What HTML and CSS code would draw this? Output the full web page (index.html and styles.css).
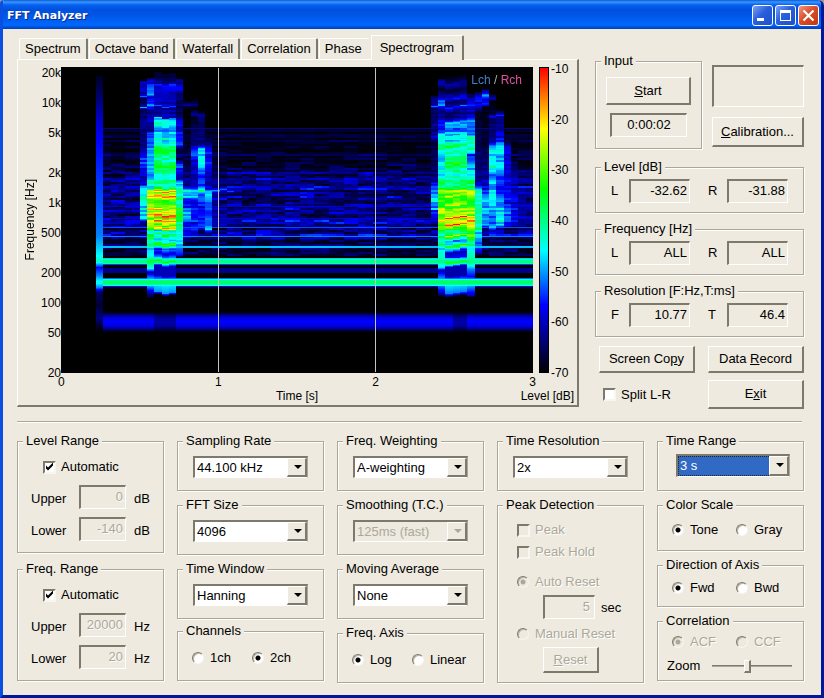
FILE: index.html
```html
<!DOCTYPE html>
<html lang="en">
<head>
<meta charset="utf-8">
<title>FFT Analyzer</title>
<link rel="stylesheet" href="styles.css">
</head>
<body>
<div class="window">
  <header class="titlebar">
    <h1>FFT Analyzer</h1>
    <button class="caption" aria-label="Minimize"><svg viewBox="0 0 21 21"><path d="M5 13h7v3H5z" fill="#fff"/></svg></button>
    <button class="caption" aria-label="Maximize"><svg viewBox="0 0 21 21"><path d="M5 5h11v11H5zM6 8v7h9V8z" fill="#fff" fill-rule="evenodd"/></svg></button>
    <button class="caption caption-close" aria-label="Close"><svg viewBox="0 0 21 21"><path d="M5.5 5.5l10 10M15.500 5.500l-10 10" stroke="#fff" stroke-width="2.200"/></svg></button>
  </header>

  <main class="content">
    <div class="top">
      <section class="tabbed">
        <div class="tabs" role="tablist">
          <button class="tab" role="tab">Spectrum</button>
          <button class="tab" role="tab">Octave band</button>
          <button class="tab" role="tab">Waterfall</button>
          <button class="tab" role="tab">Correlation</button>
          <button class="tab" role="tab">Phase</button>
          <button class="tab tab-active" role="tab" aria-selected="true">Spectrogram</button>
        </div>
        <div class="panel">
          <div class="chart">
            <div class="axis-title"><span>Frequency [Hz]</span></div>
            <div class="freq-ticks"><span>20k</span><span>10k</span><span>5k</span><span>2k</span><span>1k</span><span>500</span><span>200</span><span>100</span><span>50</span><span>20</span></div>
            <div class="plot">
              <canvas id="spectrogram" width="472" height="306"></canvas>
              <div class="legend"><span class="lch">Lch</span> / <span class="rch">Rch</span></div>
            </div>
            <div class="scale"></div>
            <div class="level-ticks"><span>-10</span><span>-20</span><span>-30</span><span>-40</span><span>-50</span><span>-60</span><span>-70</span></div>
            <div class="time-ticks"><span>0</span><span>1</span><span>2</span><span>3</span></div>
            <div class="time-title">Time [s]</div>
            <div class="level-title">Level [dB]</div>
          </div>
        </div>
      </section>

      <section class="side">
        <div class="side-top">
          <fieldset class="input-group">
            <legend>Input</legend>
            <button class="btn btn-start"><u>S</u>tart</button>
            <output class="sunken clock">0:00:02</output>
          </fieldset>
          <div class="calibration">
            <div class="sunken lamp"></div>
            <button class="btn btn-calibration"><u>C</u>alibration...</button>
          </div>
        </div>
        <fieldset class="readout">
          <legend>Level [dB]</legend>
          <label for="level-l">L</label><output class="sunken" id="level-l">-32.62</output>
          <label class="second" for="level-r">R</label><output class="sunken" id="level-r">-31.88</output>
        </fieldset>
        <fieldset class="readout">
          <legend>Frequency [Hz]</legend>
          <label for="freq-l">L</label><output class="sunken" id="freq-l">ALL</output>
          <label class="second" for="freq-r">R</label><output class="sunken" id="freq-r">ALL</output>
        </fieldset>
        <fieldset class="readout">
          <legend>Resolution [F:Hz,T:ms]</legend>
          <label for="res-f">F</label><output class="sunken" id="res-f">10.77</output>
          <label class="second" for="res-t">T</label><output class="sunken" id="res-t">46.4</output>
        </fieldset>
        <div class="actions">
          <button class="btn">Screen Co<u>p</u>y</button>
          <button class="btn">Data <u>R</u>ecord</button>
          <label class="option"><input type="checkbox">Split L-R</label>
          <button class="btn btn-exit">E<u>x</u>it</button>
        </div>
      </section>
    </div>

    <hr class="divider">

    <div class="settings">
      <div class="column column-ranges">
        <fieldset class="range">
          <legend>Level Range</legend>
          <label class="option auto"><input type="checkbox" checked>Automatic</label>
          <div class="bound"><label for="lv-up">Upper</label><input class="sunken" id="lv-up" value="0" disabled><span>dB</span></div>
          <div class="bound"><label for="lv-lo">Lower</label><input class="sunken" id="lv-lo" value="-140" disabled><span>dB</span></div>
        </fieldset>
        <fieldset class="range">
          <legend>Freq. Range</legend>
          <label class="option auto"><input type="checkbox" checked>Automatic</label>
          <div class="bound"><label for="fr-up">Upper</label><input class="sunken" id="fr-up" value="20000" disabled><span>Hz</span></div>
          <div class="bound"><label for="fr-lo">Lower</label><input class="sunken" id="fr-lo" value="20" disabled><span>Hz</span></div>
        </fieldset>
      </div>

      <div class="column">
        <fieldset class="choice"><legend>Sampling Rate</legend>
          <div class="combo"><select aria-label="Sampling Rate"><option>44.100 kHz</option></select></div></fieldset>
        <fieldset class="choice"><legend>FFT Size</legend>
          <div class="combo"><select aria-label="FFT Size"><option>4096</option></select></div></fieldset>
        <fieldset class="choice"><legend>Time Window</legend>
          <div class="combo"><select aria-label="Time Window"><option>Hanning</option></select></div></fieldset>
        <fieldset class="radios radios-tall radios-raised"><legend>Channels</legend>
          <label class="option"><input type="radio" name="channels">1ch</label>
          <label class="option"><input type="radio" name="channels" checked>2ch</label></fieldset>
      </div>

      <div class="column">
        <fieldset class="choice"><legend>Freq. Weighting</legend>
          <div class="combo"><select aria-label="Freq. Weighting"><option>A-weighting</option></select></div></fieldset>
        <fieldset class="choice"><legend>Smoothing (T.C.)</legend>
          <div class="combo combo-disabled"><select aria-label="Smoothing" disabled><option>125ms (fast)</option></select></div></fieldset>
        <fieldset class="choice"><legend>Moving Average</legend>
          <div class="combo"><select aria-label="Moving Average"><option>None</option></select></div></fieldset>
        <fieldset class="radios radios-tall"><legend>Freq. Axis</legend>
          <label class="option"><input type="radio" name="axis" checked>Log</label>
          <label class="option"><input type="radio" name="axis">Linear</label></fieldset>
      </div>

      <div class="column">
        <fieldset class="choice"><legend>Time Resolution</legend>
          <div class="combo"><select aria-label="Time Resolution"><option>2x</option></select></div></fieldset>
        <fieldset class="peak"><legend>Peak Detection</legend>
          <label class="option disabled"><input type="checkbox" disabled>Peak</label>
          <label class="option disabled"><input type="checkbox" disabled>Peak Hold</label>
          <label class="option disabled auto-reset"><input type="radio" name="reset" checked disabled>Auto Reset</label>
          <div class="delay"><input class="sunken" id="delay" value="5" disabled><label for="delay">sec</label></div>
          <label class="option disabled manual-reset"><input type="radio" name="reset" disabled>Manual Reset</label>
          <button class="btn btn-reset" disabled><u>R</u>eset</button></fieldset>
      </div>

      <div class="column">
        <fieldset class="choice choice-focus"><legend>Time Range</legend>
          <div class="combo combo-focus"><select aria-label="Time Range"><option>3 s</option></select></div></fieldset>
        <fieldset class="radios radios-wide"><legend>Color Scale</legend>
          <label class="option"><input type="radio" name="color" checked>Tone</label>
          <label class="option"><input type="radio" name="color">Gray</label></fieldset>
        <fieldset class="radios radios-wide radios-short"><legend>Direction of Axis</legend>
          <label class="option"><input type="radio" name="direction" checked>Fwd</label>
          <label class="option"><input type="radio" name="direction">Bwd</label></fieldset>
        <fieldset class="radios radios-wide correlation"><legend>Correlation</legend>
          <label class="option disabled"><input type="radio" name="corr" checked disabled>ACF</label>
          <label class="option disabled"><input type="radio" name="corr" disabled>CCF</label>
          <div class="zoom"><label for="zoom">Zoom</label><input type="range" id="zoom" min="0" max="100" value="43"></div></fieldset>
      </div>
    </div>
  </main>
</div>
<script src="spectrogram.js"></script>
</body>
</html>
```
FILE: styles.css
```css
:root {
  --face: #eeeadf;
  --dark: #7d796b;
  --line: #aca899;
  --light: #fff;
}

* { box-sizing: border-box; }

body {
  margin: 0;
  background: #9a9a9a;
  color: #000;
  font: 13px/16px "Liberation Sans", Arial, sans-serif;
}

button, input, select { font: inherit; color: inherit; margin: 0; }

.window {
  min-height: 100vh;
  display: flex;
  flex-direction: column;
  background: var(--face);
  border: solid;
  border-width: 0 3px 3px;
  border-color: #0a4fe0 #00189c #00189c #0a4fe0;
  border-radius: 4px 6px 0 0;
  overflow: hidden;
}

.titlebar {
  display: flex;
  align-items: center;
  gap: 2px;
  height: 29px;
  margin: 0 -3px;
  padding: 2px 5px 0 7px;
  background: linear-gradient(#0a5ad8 0, #3a95ff 2px, #0560f0 5px, #0050dd 10px, #0058ea 17px, #0068ff 25px, #0048c8 28px, #0040b8 29px);
}

.titlebar h1 {
  flex: 1;
  margin: 0;
  color: #fff;
  font: bold 11px/16px "DejaVu Sans", Verdana, sans-serif;
  text-shadow: 1px 1px 0 #0a2a80;
}

.caption {
  width: 21px;
  height: 21px;
  padding: 0;
  border: 1px solid #fff;
  border-radius: 3px;
  background: linear-gradient(135deg, #7ba2f2, #2a5fdc 45%, #1c50cc);
}

.caption svg { display: block; width: 21px; height: 21px; margin: -1px; }
.caption-close { background: linear-gradient(135deg, #f09a80, #dc4c28 45%, #c03810); }

.content { padding: 6px 17px 12px 14px; }

.top { display: flex; gap: 16px; }

/* Tabs and chart panel */
.tabbed { flex: 1; min-width: 0; }

.tabs {
  display: flex;
  align-items: flex-end;
  gap: 1px;
  height: 24px;
  padding-left: 2px;
}

.tab {
  height: 21px;
  padding: 0 5px;
  border: solid;
  border-width: 1px 2px 0 1px;
  border-color: var(--light) var(--dark) var(--light) var(--light);
  border-radius: 2px 2px 0 0;
  background: var(--face);
  white-space: nowrap;
}

.tab:nth-last-child(2) { border-right-color: var(--face); padding-right: 6px; }

.tab-active {
  position: relative;
  height: 25px;
  margin-bottom: -1px;
  padding: 0 8px 1px;
}

.panel {
  border: solid;
  border-width: 1px 2px 2px 1px;
  border-color: var(--light) var(--dark) var(--dark) var(--light);
  padding: 7px 2px 2px 1px;
}

.chart {
  display: grid;
  grid-template-columns: 22px 20px 1fr 16px 26px;
  grid-template-rows: 306px 16px 14px;
  font-size: 12px;
}

.axis-title { display: flex; align-items: center; justify-content: center; }
.axis-title span { writing-mode: vertical-rl; transform: rotate(180deg); }

.freq-ticks {
  display: grid;
  grid-template-rows: 3fr 3fr 4fr 3fr 3fr 4fr 3fr 3fr 4fr 16px;
  justify-items: end;
  margin: -2px 0 -8px;
  padding-right: 1px;
}

.plot { position: relative; background: #000; min-width: 0; }
.plot canvas { display: block; width: 100%; height: 100%; image-rendering: pixelated; }

.legend {
  position: absolute;
  top: 5px;
  right: 11px;
  color: #b0b0b0;
}
.lch { color: #4080d0; }
.rch { color: #e050a0; }

.scale {
  margin-left: 6px;
  border: 1px solid #000;
  background: linear-gradient(#f00, #ff0 20%, #0f0 40%, #0ff 60%, #00f 78%, #000);
}

.level-ticks {
  display: flex;
  flex-direction: column;
  justify-content: space-between;
  margin: -6px 0 -8px;
  padding-left: 2px;
}

.time-ticks {
  grid-column: 3;
  grid-row: 2;
  display: flex;
  justify-content: space-between;
  margin: 1px -3px 0;
}

.time-title { grid-column: 3; grid-row: 3; text-align: center; line-height: 14px; }
.level-title {
  grid-column: 3 / 6;
  grid-row: 3;
  justify-self: end;
  line-height: 14px;
  padding-right: 1px;
}

/* Group boxes */
fieldset {
  --inset: 14px;
  min-width: 0;
  margin: 0;
  padding: 0 0 0 var(--inset);
  border: 1px solid var(--line);
  box-shadow: 1px 1px 0 var(--light), inset 1px 1px 0 var(--light);
}

legend {
  margin-left: calc(5px - var(--inset));
  padding: 0 3px;
  background: var(--face);
  height: 16px;
}

.sunken {
  display: block;
  border: solid;
  border-width: 2px 1px 1px 2px;
  border-color: var(--dark) var(--light) var(--light) var(--dark);
  background: var(--face);
  height: 24px;
  padding: 0 2px 2px;
  line-height: 19px;
  text-align: right;
}

.btn {
  height: 27px;
  padding: 0;
  border: solid;
  border-width: 1px 2px 2px 1px;
  border-color: var(--light) var(--dark) var(--dark) var(--light);
  background: var(--face);
}

/* Right-hand column */
.side { width: 209px; padding-top: 18px; }
.side-top { display: flex; gap: 10px; margin-bottom: 10px; }
.input-group { --inset: 10px; width: 107px; padding: 8px 10px 11px var(--inset); }
.btn-start { width: 100%; height: 28px; }
.clock { margin: 8px 4px 0; text-align: center; }
.calibration { flex: 1; padding-top: 12px; }
.lamp { height: 42px; }
.btn-calibration { width: 100%; height: 30px; margin-top: 10px; }

.readout {
  --inset: 15px;
  display: grid;
  grid-template-columns: 18px 61px 1fr 61px;
  padding: 4px 15px 9px var(--inset);
  margin-bottom: 8px;
}
.readout label { padding-top: 4px; }
.readout .second { padding-left: 18px; }

.actions {
  display: grid;
  grid-template-columns: 96px 96px;
  justify-content: space-between;
  row-gap: 7px;
  margin-top: 9px;
  padding-left: 4px;
}
.actions .option { padding-left: 4px; }
.btn-exit { height: 29px; }

/* Checkboxes and radio buttons */
.option { display: flex; align-items: center; gap: 5px; white-space: nowrap; }
.disabled, .btn:disabled, input:disabled {
  color: var(--line);
  text-shadow: 1px 1px 0 var(--light);
}

input[type="checkbox"], input[type="radio"] {
  appearance: none;
  flex: none;
  width: 13px;
  height: 13px;
  border: 2px solid;
  border-color: var(--dark) #f8f6f0 #f8f6f0 var(--dark);
  background: #fff;
}

input[type="checkbox"]:checked::before {
  content: "";
  display: block;
  width: 9px;
  height: 9px;
  background: #000;
  clip-path: polygon(1px 3px, 3px 5px, 8px 0, 8px 3px, 3px 8px, 1px 6px);
}

input[type="radio"] { width: 12px; height: 12px; border-radius: 50%; margin-right: 1px; border-width: 1px; box-shadow: inset 1px 1px 0 #b8b4a6; }
input[type="radio"]:checked { background: radial-gradient(circle, #000 0 2px, #fff 3px); }
input[type="checkbox"]:disabled, input[type="radio"]:disabled { background: var(--face); }
input[type="radio"]:checked:disabled { background: radial-gradient(circle, var(--line) 0 2px, var(--face) 3px); }

/* Settings */
.divider {
  height: 2px;
  margin: 12px 2px 10px 0;
  border: solid;
  border-width: 1px 0;
  border-color: var(--line) transparent var(--light);
}

.settings { display: grid; grid-template-columns: repeat(5, 1fr); gap: 13px; }
.column { display: flex; flex-direction: column; gap: 6px; min-width: 0; }
.column-ranges { gap: 8px; }

.range { --inset: 13px; padding: 10px 9px 11px var(--inset); }
.auto { margin: 0 0 10px 12px; }
.bound {
  display: grid;
  grid-template-columns: 48px 1fr 28px;
  margin-bottom: 8px;
}
.bound:last-child { margin-bottom: 0; }
.bound label, .bound span { padding-top: 6px; }
.bound span { padding-left: 8px; }
.bound .sunken { width: 100%; min-width: 0; }

.choice { --inset: 15px; padding: 7px 15px 12px var(--inset); }
.choice-focus { --inset: 18px; padding: 5px 13px 13px var(--inset); }

.combo {
  position: relative;
  height: 22px;
  border: solid;
  border-width: 2px 1px 1px 2px;
  border-color: var(--dark) var(--line) var(--light) var(--dark);
  background: #fff;
}
.choice-focus .combo { height: 23px; }

.combo select {
  appearance: none;
  display: block;
  width: 100%;
  height: 100%;
  padding: 0 18px 0 2px;
  border: 0;
  border-radius: 0;
  outline: 0;
  background: transparent;
}

.combo::before {
  content: "";
  position: absolute;
  top: 0;
  right: 0;
  bottom: 0;
  width: 17px;
  border: solid;
  border-width: 1px 2px 2px 1px;
  border-color: var(--light) var(--dark) var(--dark) var(--light);
  background: var(--face);
  pointer-events: none;
}

.combo::after {
  content: "";
  position: absolute;
  top: 7px;
  right: 5px;
  border: solid transparent;
  border-width: 4px 4px 0;
  border-top-color: #000;
  pointer-events: none;
}

.combo-disabled { background: var(--face); }
.combo-disabled select { color: var(--line); opacity: 1; }
.combo-disabled::after { border-top-color: var(--line); }

.combo-focus select {
  color: #fff;
  background: #316ac5;
  outline: 1px dotted #222;
  outline-offset: -1px;
}

.radios {
  display: grid;
  grid-template-columns: 60px 1fr;
  padding: 9px 8px 12px var(--inset);
}
.radios-tall { padding-top: 11px; padding-bottom: 14px; }
.radios-raised { margin-top: -2px; }
.radios-wide { grid-template-columns: 64px 1fr; }
.radios-short { padding-top: 7px; padding-bottom: 10px; }

.correlation { padding: 5px 11px 6px var(--inset); row-gap: 8px; }
.zoom { grid-column: 1 / 3; display: flex; gap: 12px; margin-left: -5px; }

input[type="range"] {
  appearance: none;
  flex: 1;
  min-width: 0;
  height: 16px;
  background: transparent;
}
input[type="range"]::-webkit-slider-runnable-track {
  height: 2px;
  border-top: 1px solid var(--dark);
  border-bottom: 1px solid var(--line);
}
input[type="range"]::-webkit-slider-thumb {
  appearance: none;
  width: 7px;
  height: 13px;
  margin-top: -6px;
  border: solid;
  border-width: 1px 2px 2px 1px;
  border-color: var(--light) var(--dark) var(--dark) var(--light);
  background: var(--face);
}

.peak { --inset: 19px; display: flex; flex-direction: column; align-items: flex-start; padding: 9px 10px 9px var(--inset); }
.peak .option + .option { margin-top: 6px; }
.peak .option + .auto-reset { margin-top: 14px; }
.delay { display: flex; gap: 6px; margin: 5px 0 7px 26px; }
.delay .sunken { width: 52px; padding-right: 4px; }
.delay label { padding-top: 5px; }
.btn-reset { width: 56px; height: 26px; margin: 5px 0 0 26px; }
```
FILE: spectrogram.js
```js
(function () {
  var canvas = document.getElementById("spectrogram");
  var ctx = canvas.getContext("2d");
  var W = canvas.width, H = canvas.height;
  var TOP = 67, START = 34.500, HOP = 7.280;

  // Level 0..1 to black, blue, cyan, green, yellow, red.
  var stops = [[0, 0, 0], [0, 0, 255], [0, 255, 255], [0, 255, 0], [255, 255, 0], [255, 0, 0]];
  function color(v) {
    v = Math.max(0, Math.min(0.999, v)) * 5;
    var i = Math.floor(v), f = v - i, a = stops[i], b = stops[i + 1];
    return [0, 1, 2].map(function (c) { return a[c] + (b[c] - a[c]) * f; });
  }

  function noise(a, b) {
    var n = Math.sin(a * 127.1 + b * 311.7) * 43758.5453;
    return n - Math.floor(n);
  }

  // Level profiles: pairs of row and level, interpolated linearly.
  function at(p, y) {
    if (!p || y < p[0] || y > p[p.length - 2]) return 0;
    for (var i = 2; i < p.length; i += 2) {
      if (y <= p[i]) return p[i - 1] + (p[i + 1] - p[i - 1]) * (y - p[i - 2]) / (p[i] - p[i - 2]);
    }
    return 0;
  }

  var onset = [76, .03, 95, .08, 120, .16, 140, .2, 200, .26, 235, .3, 255, .4, 261, .45, 267, .2, 275, .3, 282, .42, 287, .3, 292, .07, 305, .04, 318, .1, 330, 0];
  // Voiced bands between 187 and 233, then the lower harmonics.
  var core1 = [73, .04, 80, .06, 84, .18, 88, .15, 95, .13, 105, .15, 106, .26, 108, .12, 117, .13, 118, .36, 124, .42, 128, .3, 135, .38, 143, .42, 150, .52, 160, .46, 166, .54, 178, .46, 187, .48, 189, .7, 191, .9, 193, .72, 196, .86, 199, .62, 203, .6, 206, .76, 208, .64, 210, .84, 212, .76, 214, .8, 215, 1, 217, .92, 218, .66, 221, .9, 223, .78, 225, .62, 227, .85, 229, .7, 231, .4, 234, .58, 237, .4, 240, .36, 244, .62, 248, .35, 253, .16, 257, .3, 261, .6, 266, .15, 275, .14, 282, .4, 292, .32, 295, 0];
  var core2 = [76, .02, 80, .05, 83, .12, 90, .03, 98, .16, 101, .06, 105, .12, 106, .27, 109, .14, 114, .08, 119, .14, 122, .32, 127, .28, 134, .3, 135, .48, 139, .38, 145, .55, 149, .4, 155, .46, 162, .56, 168, .46, 182, .48, 188, .6, 191, .78, 193, .66, 195, .76, 197, .58, 201, .6, 204, .8, 207, .56, 210, .82, 212, .7, 215, .76, 217, .98, 219, .7, 222, .76, 224, .95, 226, .68, 229, .5, 233, .55, 235, .72, 237, .5, 240, .3, 243, .36, 246, .62, 249, .35, 252, .14, 257, .2, 262, .62, 266, .14, 275, .13, 282, .4, 292, .3, 296, 0];
  var cells = {
    0: onset,
    6: [80, .14, 94, .12, 95, .3, 97, .05, 105, .1, 106, .34, 108, .05, 117, .1, 150, .1, 157, .24, 165, .2, 183, .14, 185, .38, 217, .4, 220, .1, 225, 0],
    7: [78, .08, 82, .18, 94, .3, 97, .1, 106, .32, 110, .08, 116, .14, 130, .1, 136, .3, 150, .26, 155, .36, 170, .34, 188, .42, 190, .72, 196, .84, 199, .6, 205, .7, 209, .82, 212, .66, 214, .9, 218, .66, 222, .8, 226, .66, 231, .45, 235, .58, 240, .42, 244, .52, 248, .38, 255, .4, 261, .56, 268, .4, 272, .14, 282, .45, 290, .2, 298, 0],
    8: core1, 9: core1, 10: core1,
    11: [80, .1, 90, .2, 94, .08, 115, .06, 120, .12, 135, .2, 145, .24, 150, .03, 160, .03, 165, .25, 180, .15, 188, .5, 200, .45, 215, .62, 225, .5, 240, .4, 256, .2, 258, 0],
    12: [100, .02, 104, .1, 108, 0, 150, .02, 185, .1, 188, .38, 192, .4, 200, .15, 215, .4, 225, .15, 235, .2, 240, 0],
    13: [100, .02, 104, .1, 108, 0, 114, .12, 118, .02, 144, .12, 155, .28, 162, .14, 186, .14, 190, .4, 194, .4, 200, .2, 230, .22, 234, 0],
    14: [112, .02, 116, .12, 125, .06, 144, .1, 150, .34, 164, .42, 176, .2, 186, .22, 191, .5, 195, .3, 210, .18, 226, .28, 232, 0],
    15: [135, .02, 146, .15, 160, .22, 185, .1, 190, .38, 195, .35, 210, .25, 228, .32, 234, 0],
    16: [160, .02, 188, .1, 190, .3, 193, .1, 220, .12, 225, 0],
    17: [186, .05, 190, .26, 193, .05], 18: [187, .05, 190, .22, 192, .05], 19: [188, .05, 190, .16, 192, .05],
    46: [96, .08, 104, .1, 106, .26, 108, .08, 134, .1, 136, .24, 140, .05, 180, .06, 186, .32, 205, .35, 220, .15, 226, 0],
    47: [80, .06, 84, .14, 90, .02, 98, .14, 106, .3, 112, .08, 122, .18, 133, .24, 135, .44, 140, .38, 146, .52, 153, .34, 165, .36, 178, .44, 188, .56, 191, .7, 197, .6, 205, .56, 212, .78, 217, .66, 222, .8, 227, .62, 235, .48, 250, .42, 261, .46, 268, .38, 271, .14, 282, .38, 292, .18, 298, 0],
    48: core2, 49: core2, 50: core2,
    51: [92, .02, 98, .12, 106, .22, 112, .1, 122, .3, 133, .3, 135, .46, 150, .42, 154, .22, 170, .38, 188, .6, 192, .78, 200, .58, 207, .68, 211, .82, 214, .7, 217, .92, 225, .76, 231, .56, 235, .7, 238, .5, 248, .42, 261, .5, 268, .3, 275, .2, 282, .38, 294, .14, 296, 0],
    52: [92, .06, 97, .2, 108, .14, 112, .02, 140, .06, 160, .08, 183, .1, 190, .5, 198, .42, 215, .52, 228, .45, 236, .34, 250, .2, 256, 0],
    53: [90, .06, 96, .3, 100, .1, 104, .22, 108, .02, 140, .02, 170, .1, 188, .16, 195, .28, 212, .35, 225, .3, 230, 0],
    54: [93, .02, 97, .12, 100, 0, 113, .05, 115, .18, 118, .06, 140, .12, 144, .35, 165, .42, 175, .3, 195, .42, 215, .3, 226, .32, 230, .1, 234, 0],
    55: [110, .02, 115, .18, 120, .08, 140, .2, 146, .42, 156, .3, 165, .38, 180, .2, 200, .25, 212, .42, 224, .4, 228, .1, 232, 0],
    56: [140, .04, 150, .18, 170, .15, 200, .18, 215, .3, 226, .2, 230, 0],
    57: [160, .04, 180, .12, 215, .2, 228, 0], 58: [180, .05, 215, .14, 226, 0]
  };

  function background(k, y) {
    var row = Math.floor(y / 2), v = 0;
    if (y === 128) return 0.120;
    if (y > 129 && y < 256) {
      var depth = Math.min(1, (y - 122) / 75);
      var cell = noise(Math.floor(k / 2) + 3, row), line = noise(row, 9);
      v = depth * (0.15 * cell * cell + 0.06 * line);
      if (y > 170) v += 0.05 * noise(k + 1, row + 60);
      if (line > 0.82) v += 0.03;
      if (y > 238) v *= 0.55;
    }
    if (y === 206 || y === 218) v = Math.max(v, 0.17);
    if (y === 227) v = 0.26;
    if (y === 236) v = 0.3;
    if (y === 246 || y === 247) v = 0.35;
    if (y >= 258 && y <= 264) v = [0.36, 0.46, 0.5, 0.5, 0.5, 0.45, 0.25][y - 258];
    if (y >= 268 && y <= 272) v = 0.11;
    if (y >= 278 && y <= 286) v = [0.28, 0.42, 0.5, 0.52, 0.52, 0.52, 0.48, 0.4, 0.2][y - 278];
    var low = Math.abs(y - 321.500);
    if (low < 10) v = 0.2 * (1 - Math.pow(low / 10, 2)) * ((k >= 8 && k <= 10) || k === 49 || k === 50 ? 0.65 : 1);
    return v;
  }

  var image = ctx.createImageData(W, H);
  for (var x = 0; x < W; x++) {
    var k = Math.floor((x - START) / HOP);
    for (var r = 0; r < H; r++) {
      var y = r + TOP, v = 0;
      if (k >= 0) {
        // Neighbouring frames drift by a row, which staggers the bands.
        var burst = at(cells[k], k > 0 ? y + (k % 3) - 1 : y);
        if (burst && k > 0 && y < 250) {
          var n = noise(k, Math.floor(y / 2)) - 0.5, shared = noise(Math.floor(y / 2), 5) - 0.5;
          burst = Math.max(0, burst + (n * 0.11 + shared * 0.1) * Math.min(1, burst * 4));
        }
        v = k === 0 ? burst : Math.max(burst, background(k, y));
      }
      var c = color(v), i = (r * W + x) * 4;
      image.data[i] = c[0];
      image.data[i + 1] = c[1];
      image.data[i + 2] = c[2];
      image.data[i + 3] = 255;
    }
  }
  ctx.putImageData(image, 0, 0);

  // Grid lines at each whole second.
  ctx.fillStyle = "#c4c4c4";
  ctx.fillRect(157, 1, 1, H - 2);
  ctx.fillRect(314, 1, 1, H - 2);
})();
```
